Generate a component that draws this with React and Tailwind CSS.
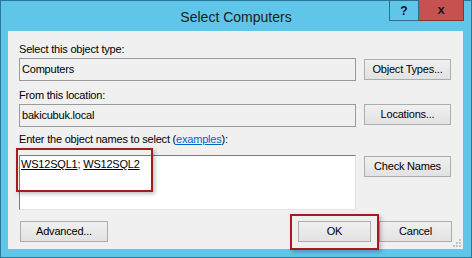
import React from "react";

const font = "font-['Liberation_Sans',Arial,sans-serif]";

function Btn({ children, className = "" }) {
  return (
    <div
      className={`h-[21px] flex items-center justify-center border border-[#adadad] bg-gradient-to-b from-[#f0f0f0] to-[#e2e2e2] text-[11px] tracking-[-0.2px] text-black ${className}`}
    >
      {children}
    </div>
  );
}

export default function App() {
  return (
    <div className={`w-[472px] h-[258px] bg-[#5fc6e9] border border-[#2c7899] flex flex-col relative ${font}`}>
      {/* Title bar */}
      <div className="h-[30px] flex items-center justify-center text-[14px] text-[#1c1c1c] leading-none pt-[1px]">
        Select Computers
      </div>
      <div className="absolute top-[-1px] right-[7px] flex h-[21px]">
        <div className="w-[30px] h-[21px] border border-[#2c6f8c] flex items-center justify-center text-[12px] font-bold text-[#111]">
          ?
        </div>
        <div className="w-[45px] h-[21px] bg-[#c75050] border-r border-b border-[#8c3030] flex items-center justify-center text-[13px] font-bold text-[#1a1a1a]">
          x
        </div>
      </div>

      {/* Client area */}
      <div className="ml-[7px] w-[455px] h-[218px] bg-[#f0f0f0] relative flex flex-col pl-[11px] text-[11px] leading-[13px] tracking-[-0.2px] text-black">
        <div className="pt-[12px]">Select this object type:</div>
        <div className="mt-[2px] flex gap-[8px] items-start">
          <div className="w-[337px] h-[23px] border border-[#9a9a9a] flex items-center pl-[2px]">Computers</div>
          <Btn className="w-[87px] mt-[1px]">Object Types...</Btn>
        </div>

        <div className="mt-[8px]">From this location:</div>
        <div className="mt-[2px] flex gap-[8px] items-start">
          <div className="w-[337px] h-[23px] border border-[#9a9a9a] flex items-center pl-[2px]">bakicubuk.local</div>
          <Btn className="w-[87px]">Locations...</Btn>
        </div>

        <div className="mt-[6px]">
          Enter the object names to select (<span className="text-[#0066cc] underline">examples</span>):
        </div>
        <div className="mt-[9px] flex gap-[8px] items-start">
          <div className="w-[337px] h-[55px] bg-white border border-t-[#7a7a7a] border-l-[#7a7a7a] border-r-[#e3e3e3] border-b-[#e3e3e3] pl-[1px] pt-[2px]">
            <span className="underline">WS12SQL1</span>; <span className="underline">WS12SQL2</span>
          </div>
          <Btn className="w-[87px] mt-[1px]">Check Names</Btn>
        </div>

        <div className="mt-[11px] flex items-start">
          <Btn className="w-[88px] ml-[1px]">Advanced...</Btn>
          <div className="flex-1" />
          <Btn className="w-[73px] border-[#3c7fb1]">OK</Btn>
          <Btn className="w-[73px] ml-[8px] mr-[11px]">Cancel</Btn>
        </div>

        {/* Resize grip */}
        <svg className="absolute right-[2px] bottom-[2px]" width="8" height="8" viewBox="0 0 8 8">
          {[[6, 0], [6, 3], [3, 3], [6, 6], [3, 6], [0, 6]].map(([x, y], i) => (
            <rect key={i} x={x} y={y} width="2" height="2" fill="#c4c4c4" />
          ))}
        </svg>

        {/* Red highlight boxes */}
        <div className="absolute left-[8px] top-[117px] w-[137px] h-[44px] border-2 border-[#a41c1c] shadow-[2px_2px_4px_rgba(0,0,0,0.25)]" />
        <div className="absolute left-[282px] top-[183px] w-[89px] h-[36px] border-2 border-[#a41c1c] shadow-[2px_2px_4px_rgba(0,0,0,0.25)]" />
      </div>
    </div>
  );
}
